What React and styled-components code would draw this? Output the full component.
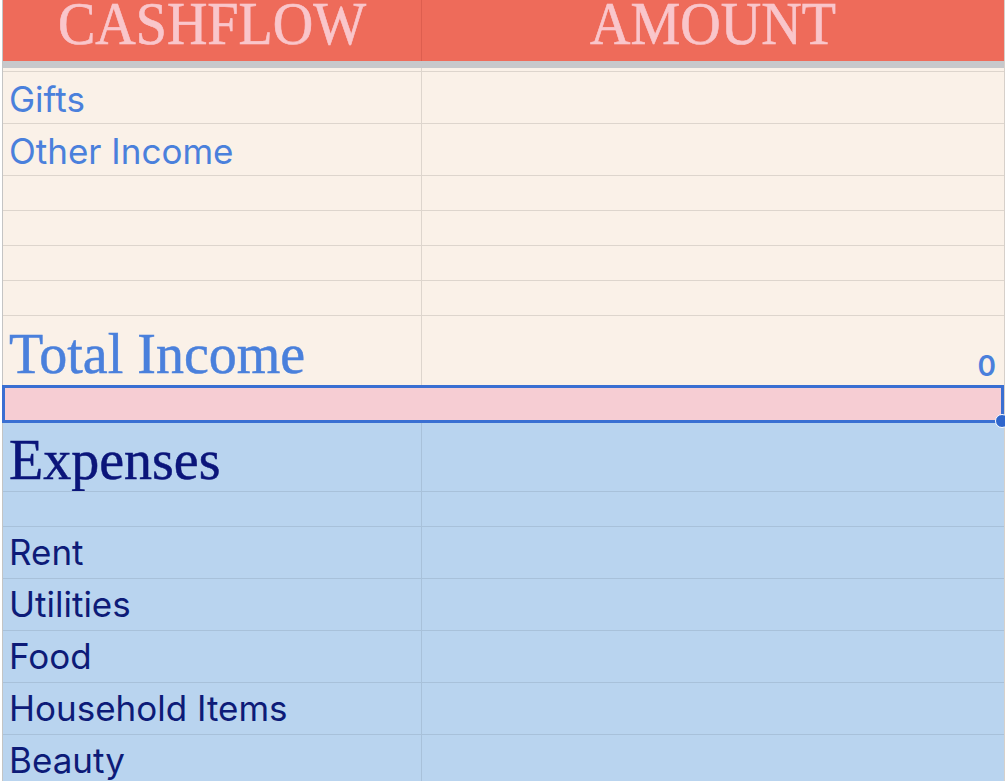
import React from "react";
import styled, { createGlobalStyle } from "styled-components";

const Global = createGlobalStyle`
  html, body { margin: 0; padding: 0; background: #ffffff; }
  body { overflow: hidden; }
`;

const Sheet = styled.div`
  margin-left: 2px;
  width: 1001px;
  border-left: 1px solid #c4c4c4;
  border-right: 1px solid #d6d0ca;
  display: flex;
  flex-direction: column;
`;

const HeaderRow = styled.div`
  display: grid;
  grid-template-columns: 419px 1fr;
  height: 61px;
  background: #ee6b5a;
  overflow: hidden;
`;

const HeaderCell = styled.div`
  display: flex;
  align-items: flex-end;
  justify-content: center;
  border-right: ${(p) => (p.$last ? "none" : "1px solid #dd5e4f")};
  font-family: "Liberation Serif", "Times New Roman", serif;
  font-size: 56px;
  line-height: 0.8;
  color: #f9c6cb;
  padding-bottom: 13px;
  box-sizing: border-box;
  -webkit-text-stroke: 0.6px #f9c6cb;
`;

const HeaderText = styled.span`
  display: inline-block;
  transform: scaleY(1.08);
  transform-origin: bottom;
`;

const FrozenBar = styled.div`
  height: 7px;
  background: #c7c8cb;
`;

const Row = styled.div`
  display: grid;
  grid-template-columns: 419px 1fr;
  height: ${(p) => p.$h}px;
  background: ${(p) => (p.$tone === "blue" ? "#b9d4ef" : "#faf1e8")};
  box-sizing: border-box;
  border-bottom: 1px solid ${(p) => (p.$tone === "blue" ? "#a8c1da" : "#ddd5cd")};
`;

const Cell = styled.div`
  display: flex;
  align-items: flex-end;
  justify-content: ${(p) => (p.$right ? "flex-end" : "flex-start")};
  padding: ${(p) => (p.$right ? "0 8px 0 0" : "0 0 0 6px")};
  border-right: ${(p) =>
    p.$last ? "none" : `1px solid ${p.$tone === "blue" ? "#a8c1da" : "#ddd5cd"}`};
  overflow: hidden;
  white-space: nowrap;
  box-sizing: border-box;
`;

const Label = styled.span`
  font-family: Inter, "Open Sans", sans-serif;
  font-size: 35px;
  line-height: 1;
  color: ${(p) => (p.$tone === "blue" ? "#0d1b78" : "#4a80dc")};
  padding-bottom: ${(p) => (p.$tone === "blue" ? 8 : 6)}px;
`;

const Title = styled.span`
  font-family: "Liberation Serif", "Times New Roman", serif;
  font-size: 56px;
  line-height: 1;
  color: ${(p) => (p.$tone === "blue" ? "#0b157a" : "#4a80dc")};
  padding-bottom: 3px;
  -webkit-text-stroke: 0.5px currentColor;
`;

const Amount = styled.span`
  font-family: Inter, sans-serif;
  font-size: 28px;
  font-weight: 600;
  line-height: 1;
  color: #4a80dc;
  padding-bottom: 5px;
`;

const SelectedRow = styled.div`
  position: relative;
  height: 36px;
  background: #f6cdd3;
`;

const Selection = styled.div`
  position: absolute;
  left: -1px;
  right: 0;
  top: -1px;
  bottom: -1px;
  border: 3px solid #3a6fd2;
  pointer-events: none;
`;

const Handle = styled.div`
  position: absolute;
  right: -8px;
  bottom: -8px;
  width: 12px;
  height: 12px;
  border-radius: 50%;
  background: #2f66cc;
  border: 1px solid #ffffff;
`;

const income = [
  { h: 4 },
  { h: 52, label: "Gifts" },
  { h: 52, label: "Other Income" },
  { h: 35 },
  { h: 35 },
  { h: 35 },
  { h: 35 },
];

const expenses = ["Rent", "Utilities", "Food", "Household Items", "Beauty"];

export default function App() {
  return (
    <>
      <Global />
      <Sheet>
        <HeaderRow>
          <HeaderCell>
            <HeaderText>CASHFLOW</HeaderText>
          </HeaderCell>
          <HeaderCell $last>
            <HeaderText>AMOUNT</HeaderText>
          </HeaderCell>
        </HeaderRow>
        <FrozenBar />
        {income.map((r, i) => (
          <Row key={i} $h={r.h}>
            <Cell>{r.label && <Label>{r.label}</Label>}</Cell>
            <Cell $last />
          </Row>
        ))}
        <Row $h={70}>
          <Cell>
            <Title>Total Income</Title>
          </Cell>
          <Cell $last $right>
            <Amount>0</Amount>
          </Cell>
        </Row>
        <SelectedRow>
          <Selection>
            <Handle />
          </Selection>
        </SelectedRow>
        <Row $h={70} $tone="blue">
          <Cell $tone="blue">
            <Title $tone="blue">Expenses</Title>
          </Cell>
          <Cell $tone="blue" $last />
        </Row>
        <Row $h={35} $tone="blue">
          <Cell $tone="blue" />
          <Cell $tone="blue" $last />
        </Row>
        {expenses.map((e) => (
          <Row key={e} $h={52} $tone="blue">
            <Cell $tone="blue">
              <Label $tone="blue">{e}</Label>
            </Cell>
            <Cell $tone="blue" $last />
          </Row>
        ))}
      </Sheet>
    </>
  );
}
